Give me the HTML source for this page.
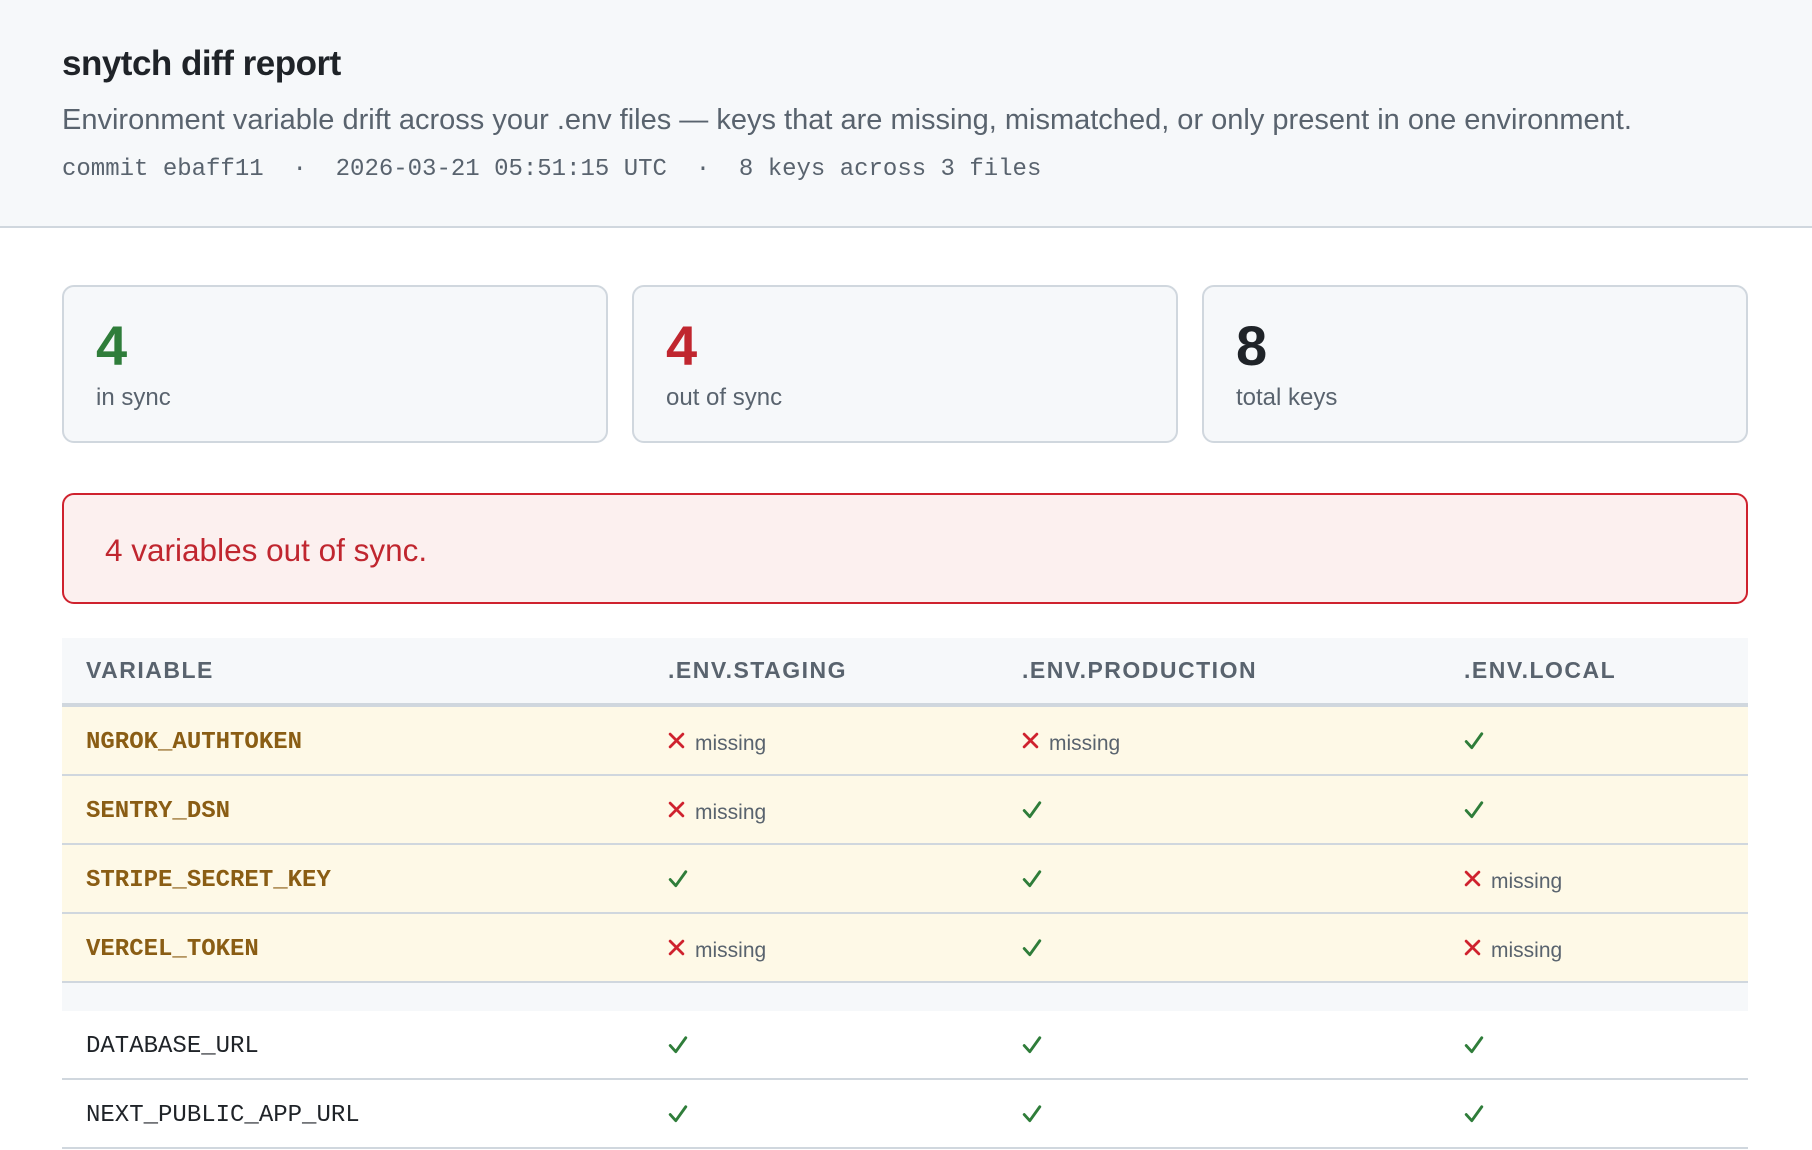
<!DOCTYPE html>
<html><head><meta charset="utf-8">
<style>
*{box-sizing:border-box;margin:0;padding:0}
body{width:1812px;height:1150px;overflow:hidden;background:#fff;font-family:"Liberation Sans",sans-serif;color:#1f2328}
.hdr{position:absolute;left:0;top:0;width:1812px;height:228px;background:#f6f8fa;border-bottom:2px solid #d0d7de}
.title{position:absolute;left:62px;top:44px;font-size:35px;font-weight:bold;letter-spacing:-0.5px;color:#1f2328}
.sub{position:absolute;left:62px;top:104px;font-size:29px;color:#59636e;white-space:nowrap}
.meta{position:absolute;left:62px;top:156px;font-family:"Liberation Mono",monospace;font-size:24px;color:#59636e;white-space:pre}
.card{position:absolute;top:285px;width:546px;height:158px;background:#f6f8fa;border:2px solid #d0d7de;border-radius:12px}
.card .n{position:absolute;left:32px;top:26px;font-size:56px;font-weight:bold}
.card .l{position:absolute;left:32px;top:97px;font-size:24px;color:#59636e}
.alert{position:absolute;left:62px;top:493px;width:1686px;height:111px;background:#fcf0ef;border:2px solid #cf222e;border-radius:12px}
.alert span{position:absolute;left:41px;top:37px;font-size:31.5px;color:#c0262f}
.tbl{position:absolute;left:62px;top:638px;width:1686px}
.row{position:relative;height:69px;border-bottom:2px solid #d0d7de}
.row div{position:absolute;top:0;height:100%;display:flex;align-items:center}
.th{background:#f6f8fa;height:69px;border-bottom:4px solid #d0d7de}
.th div{font-size:23px;font-weight:bold;color:#59636e;letter-spacing:1.5px}
.y{background:#fef9e7}
.c0{left:24px}.c1{left:606px}.c2{left:960px}.c3{left:1402px}
.v{font-family:"Liberation Mono",monospace;font-size:24px;padding-top:4px}
.y .v{font-weight:bold;color:#8a5d14}
.m{font-size:21px;color:#59636e;padding-top:6px}
.m svg{margin-right:10px;margin-top:-6px}
.gap{height:28px;background:#f6f8fa}
</style></head><body>
<div class="hdr">
<div class="title">snytch diff report</div>
<div class="sub">Environment variable drift across your .env files — keys that are missing, mismatched, or only present in one environment.</div>
<div class="meta">commit ebaff11  ·  2026-03-21 05:51:15 UTC  ·  8 keys across 3 files</div>
</div>
<div class="card" style="left:62px"><div class="n" style="color:#2f7d3a">4</div><div class="l">in sync</div></div>
<div class="card" style="left:632px"><div class="n" style="color:#c0262f">4</div><div class="l">out of sync</div></div>
<div class="card" style="left:1202px"><div class="n" style="color:#1f2328">8</div><div class="l">total keys</div></div>
<div class="alert"><span>4 variables out of sync.</span></div>
<svg width="0" height="0" style="position:absolute"><defs>
<symbol id="x" viewBox="0 0 16 16"><path d="M2 2L14 14M14 2L2 14" stroke="#cf222e" stroke-width="2.6" stroke-linecap="round"/></symbol>
<symbol id="k" viewBox="0 0 18 18"><path d="M2 9.5L7 15L16 2.5" fill="none" stroke="#2f7d3a" stroke-width="2.6" stroke-linecap="round" stroke-linejoin="round"/></symbol>
</defs></svg>
<div class="tbl">
<div class="row th"><div class="c0">VARIABLE</div><div class="c1">.ENV.STAGING</div><div class="c2">.ENV.PRODUCTION</div><div class="c3">.ENV.LOCAL</div></div>
<div class="row y"><div class="c0 v">NGROK_AUTHTOKEN</div><div class="c1 m"><svg width="17" height="17"><use href="#x"/></svg>missing</div><div class="c2 m"><svg width="17" height="17"><use href="#x"/></svg>missing</div><div class="c3"><svg width="20" height="20"><use href="#k"/></svg></div></div>
<div class="row y"><div class="c0 v">SENTRY_DSN</div><div class="c1 m"><svg width="17" height="17"><use href="#x"/></svg>missing</div><div class="c2"><svg width="20" height="20"><use href="#k"/></svg></div><div class="c3"><svg width="20" height="20"><use href="#k"/></svg></div></div>
<div class="row y"><div class="c0 v">STRIPE_SECRET_KEY</div><div class="c1"><svg width="20" height="20"><use href="#k"/></svg></div><div class="c2"><svg width="20" height="20"><use href="#k"/></svg></div><div class="c3 m"><svg width="17" height="17"><use href="#x"/></svg>missing</div></div>
<div class="row y"><div class="c0 v">VERCEL_TOKEN</div><div class="c1 m"><svg width="17" height="17"><use href="#x"/></svg>missing</div><div class="c2"><svg width="20" height="20"><use href="#k"/></svg></div><div class="c3 m"><svg width="17" height="17"><use href="#x"/></svg>missing</div></div>
<div class="gap"></div>
<div class="row"><div class="c0 v">DATABASE_URL</div><div class="c1"><svg width="20" height="20"><use href="#k"/></svg></div><div class="c2"><svg width="20" height="20"><use href="#k"/></svg></div><div class="c3"><svg width="20" height="20"><use href="#k"/></svg></div></div>
<div class="row"><div class="c0 v">NEXT_PUBLIC_APP_URL</div><div class="c1"><svg width="20" height="20"><use href="#k"/></svg></div><div class="c2"><svg width="20" height="20"><use href="#k"/></svg></div><div class="c3"><svg width="20" height="20"><use href="#k"/></svg></div></div>
</div>
</body></html>
